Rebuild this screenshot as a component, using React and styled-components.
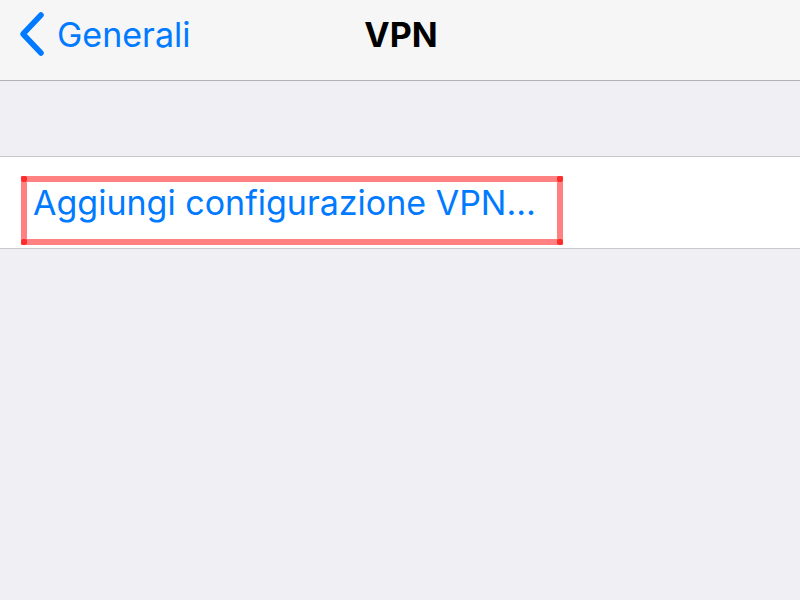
import styled, { createGlobalStyle } from "styled-components";

const Global = createGlobalStyle`
  html, body { margin: 0; padding: 0; }
  body {
    width: 800px;
    height: 600px;
    overflow: hidden;
    background: #efeff4;
    font-family: "Inter", "Liberation Sans", sans-serif;
  }
`;

const Screen = styled.div`
  width: 800px;
  height: 600px;
  background: #efeff4;
  display: flex;
  flex-direction: column;
`;

const NavBar = styled.div`
  height: 81px;
  box-sizing: border-box;
  background: #f6f6f7;
  border-bottom: 1px solid #b2b2b2;
  display: grid;
  grid-template-columns: 1fr auto 1fr;
  align-items: center;
  padding: 0 18px;
`;

const BackButton = styled.div`
  display: flex;
  align-items: center;
  gap: 11px;
  color: #007aff;
  font-size: 34px;
  margin-top: -12px;
`;

const Title = styled.div`
  font-size: 34px;
  font-weight: 700;
  color: #000;
  margin-top: -12px;
  margin-left: 2px;
`;

const Spacer = styled.div`
  height: 75px;
`;

const Group = styled.div`
  background: #fff;
  border-top: 1px solid #c8c7cc;
  border-bottom: 1px solid #c8c7cc;
`;

const Row = styled.div`
  position: relative;
  height: 91px;
  display: flex;
  align-items: center;
  padding-left: 33px;
  color: #007aff;
  font-size: 34px;
`;

const Highlight = styled.div`
  position: absolute;
  left: 21px;
  top: 19px;
  width: 542px;
  height: 69px;
  box-sizing: border-box;
  border: 6px solid rgba(255, 80, 80, 0.72);
`;

const Corner = styled.span`
  position: absolute;
  width: 6px;
  height: 6px;
  border-radius: 2px;
  background: #ff2a2a;
  ${(p) => (p.$top ? "top: -6px;" : "bottom: -6px;")}
  ${(p) => (p.$left ? "left: -6px;" : "right: -6px;")}
`;

function Chevron() {
  return (
    <svg width="28" height="46" viewBox="0 0 28 46">
      <path
        d="M23 4 L5 23 L23 42"
        fill="none"
        stroke="#007aff"
        strokeWidth="5.5"
        strokeLinecap="round"
        strokeLinejoin="round"
      />
    </svg>
  );
}

export default function App() {
  return (
    <>
      <Global />
      <Screen>
        <NavBar>
          <BackButton>
            <Chevron />
            <span>Generali</span>
          </BackButton>
          <Title>VPN</Title>
          <div />
        </NavBar>
        <Spacer />
        <Group>
          <Row>
            Aggiungi configurazione VPN…
            <Highlight>
              <Corner $top $left />
              <Corner $top />
              <Corner $left />
              <Corner />
            </Highlight>
          </Row>
        </Group>
      </Screen>
    </>
  );
}
